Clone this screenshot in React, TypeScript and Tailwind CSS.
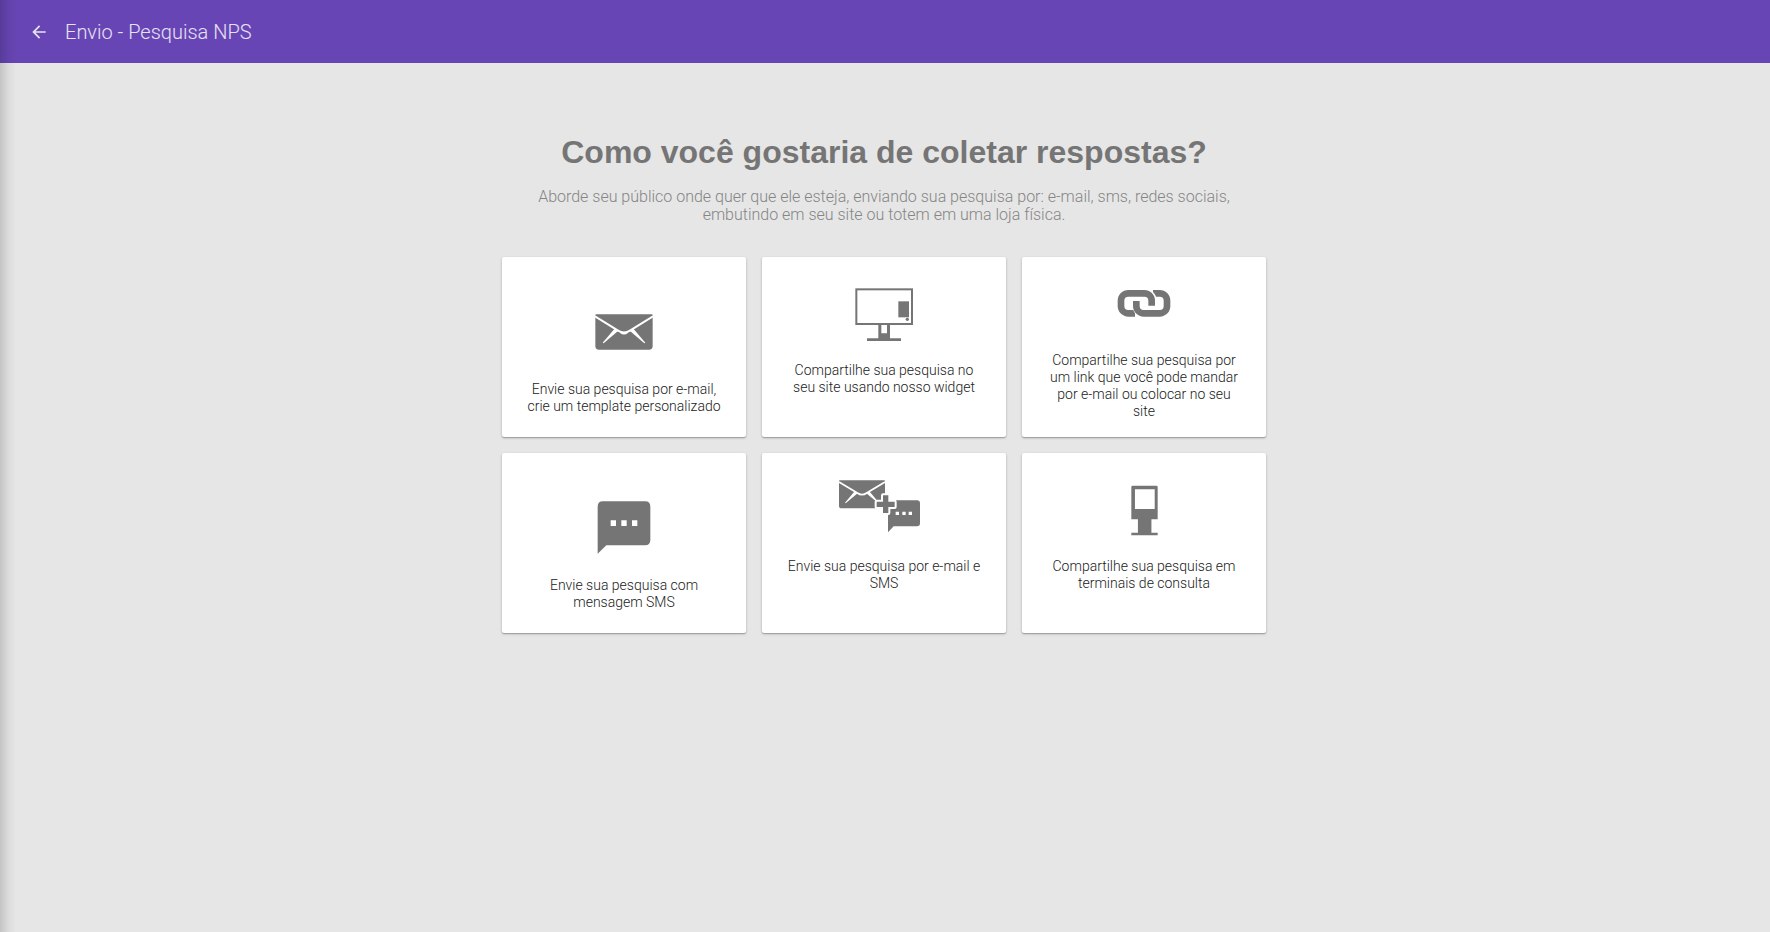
import { ReactNode } from "react";
import { MdArrowBack } from "react-icons/md";

const EmailIcon = () => (
  <svg viewBox="0 0 174 108" className="w-[58px] h-[36px] mt-[57px] mb-[31px] shrink-0" aria-hidden="true">
    <path d="M4 1H170Q173 1 173 5V96Q173 107 162 107H12Q1 107 1 96V5Q1 1 4 1Z" fill="#757575" />
    <path d="M0 7L68 49Q87 62 106 49L174 7" fill="none" stroke="#fff" strokeWidth="6" />
    <path d="M60 43L70 50L26 88L23 86Z M114 43L104 50L148 88L151 86Z" fill="#fff" />
    <path d="M76 51Q87 57 98 51L98 58Q87 65 76 58Z" fill="#fff" />
  </svg>
);

const WidgetIcon = () => (
  <svg viewBox="0 0 174 162" className="w-[58px] h-[54px] mt-[31px] mb-5 shrink-0" aria-hidden="true">
    <rect x="4" y="4" width="167" height="104" fill="none" stroke="#757575" strokeWidth="6" />
    <rect x="130" y="40" width="32" height="48" fill="#757575" />
    <circle cx="157" cy="94" r="5" fill="#757575" />
    <path d="M70 108H105V151H138V159H36V151H70Z M79 111V136H96V111Z" fill="#757575" fillRule="evenodd" />
  </svg>
);

const LinkIcon = () => (
  <svg viewBox="0 0 162 84" className="w-[54px] h-[28px] mt-8 mb-[35px] shrink-0" fill="none" aria-hidden="true">
    <path d="M54 73H34A22 22 0 0 1 12 51V35A22 22 0 0 1 34 13H82" stroke="#757575" strokeWidth="20" />
    <path d="M62 42V51A22 22 0 0 0 84 73" stroke="#fff" strokeWidth="30" />
    <path d="M108 13H128A22 22 0 0 1 150 35V51A22 22 0 0 1 128 73H80A22 22 0 0 1 58 51V36" stroke="#757575" strokeWidth="20" />
    <path d="M82 13A22 22 0 0 1 104 35V44" stroke="#fff" strokeWidth="30" />
    <path d="M80 13H82A22 22 0 0 1 104 35V50" stroke="#757575" strokeWidth="20" />
  </svg>
);

const SmsIcon = () => (
  <svg viewBox="0 0 162 159" className="w-[54px] h-[53px] mt-12 mb-[23px] shrink-0" aria-hidden="true">
    <path d="M18 1H144Q160 1 160 17V117Q160 133 144 133H28L2 158V17Q2 1 18 1Z" fill="#757575" />
    <path d="M41 58h16v17h-16z M73 58h16v17h-16z M105 58h16v17h-16z" fill="#fff" />
  </svg>
);

const EmailSmsIcon = () => (
  <svg viewBox="0 0 246 159" className="w-[82px] h-[53px] mt-[27px] mr-2 mb-[25px] shrink-0" aria-hidden="true">
    <path d="M2 1H136Q138 1 138 4V77Q138 85 130 85H8Q0 85 0 77V4Q0 1 2 1Z" fill="#757575" />
    <path d="M0 6L55 39Q69 49 83 39L138 6" fill="none" stroke="#fff" strokeWidth="5" />
    <path d="M47 34L56 40L20 70L18 68Z M91 34L82 40L118 70L120 68Z" fill="#fff" />
    <path d="M156 61H234Q243 61 243 70V130Q243 139 234 139H164L147 157V70Q147 61 156 61Z" fill="#757575" />
    <path d="M170 95h10v10h-10z M190 95h10v10h-10z M209 95h10v10h-10z" fill="#fff" />
    <path d="M132 46H148V65H167V81H148V99H132V81H113V65H132Z" fill="#757575" stroke="#fff" strokeWidth="12" strokeLinejoin="round" paintOrder="stroke" />
  </svg>
);

const TotemIcon = () => (
  <svg viewBox="0 0 82 153" className="w-[27px] h-[51px] mt-8 mb-[22px] shrink-0" aria-hidden="true">
    <path
      d="M5 1H77Q81 1 81 5V103H62V144H81V152H1V144H21V103H1V5Q1 1 5 1Z M12 12V72H72V12Z"
      fill="#757575"
      fillRule="evenodd"
    />
  </svg>
);

interface Channel {
  icon: ReactNode;
  text: string;
}

const channels: Channel[] = [
  { icon: <EmailIcon />, text: "Envie sua pesquisa por e-mail, crie um template personalizado" },
  { icon: <WidgetIcon />, text: "Compartilhe sua pesquisa no seu site usando nosso widget" },
  { icon: <LinkIcon />, text: "Compartilhe sua pesquisa por um link que você pode mandar por e-mail ou colocar no seu site" },
  { icon: <SmsIcon />, text: "Envie sua pesquisa com mensagem SMS" },
  { icon: <EmailSmsIcon />, text: "Envie sua pesquisa por e-mail e SMS" },
  { icon: <TotemIcon />, text: "Compartilhe sua pesquisa em terminais de consulta" },
];

const App = () => {
  return (
    <div className="relative min-h-screen bg-[#e6e6e6] font-['Roboto',sans-serif] font-light">
      <header className="flex h-[63px] items-center bg-[#6745b4] px-[29px] text-white/85">
        <button type="button" aria-label="Voltar" className="mr-4 cursor-pointer">
          <MdArrowBack className="size-5" />
        </button>
        <span className="text-xl">Envio - Pesquisa NPS</span>
      </header>

      <main className="mx-auto max-w-[798px] pt-[70px] pr-[18px] pb-10 pl-4 text-center">
        <h1 className="font-['Liberation_Sans',sans-serif] text-[32px] leading-[38px] font-bold text-[#757575]">
          Como você gostaria de coletar respostas?
        </h1>
        <p className="mx-auto mt-[17px] max-w-[720px] text-base leading-[18px] text-[#858585]">
          Aborde seu público onde quer que ele esteja, enviando sua pesquisa por: e-mail, sms, redes sociais,
          embutindo em seu site ou totem em uma loja física.
        </p>

        <div className="mt-[33px] grid gap-4 sm:grid-cols-3">
          {channels.map((channel) => (
            <button
              key={channel.text}
              type="button"
              className="flex min-h-[180px] cursor-pointer flex-col items-center rounded-xs bg-white px-6 text-sm leading-[17px] text-[#212121] shadow-[0_1px_3px_rgba(0,0,0,0.2),0_1px_1px_rgba(0,0,0,0.2)]"
            >
              {channel.icon}
              <span>{channel.text}</span>
            </button>
          ))}
        </div>
      </main>

      {/* shadow cast by the collapsed side menu */}
      <div className="pointer-events-none absolute inset-y-0 left-0 w-4 bg-gradient-to-r from-black/15 via-black/5 to-transparent" />
    </div>
  );
};

export default App;
